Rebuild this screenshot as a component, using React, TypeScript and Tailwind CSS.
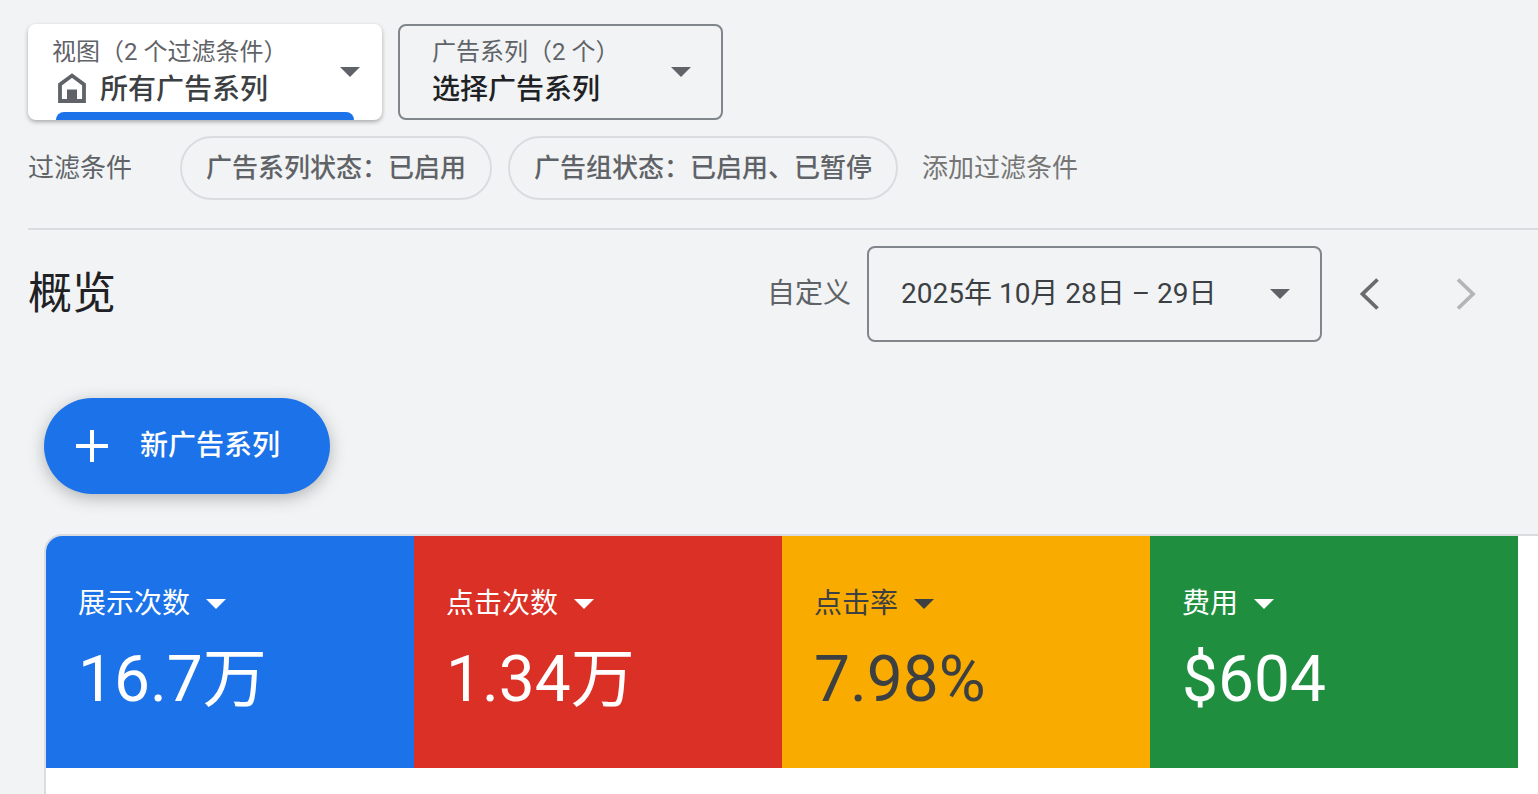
import { useState } from "react";

const metrics = [
  { label: "展示次数", value: "16.7万", className: "bg-[#1c72e8] text-white" },
  { label: "点击次数", value: "1.34万", className: "bg-[#da3026] text-white" },
  { label: "点击率", value: "7.98%", className: "bg-[#f9ab00] text-[#3c4043]" },
  { label: "费用", value: "$604", className: "bg-[#1f8f3f] text-white" },
];

const filters = ["广告系列状态：已启用", "广告组状态：已启用、已暂停"];

function Caret({ className = "" }: { className?: string }) {
  return (
    <svg viewBox="0 0 20 10" aria-hidden="true" className={`h-[10px] w-5 shrink-0 fill-current ${className}`}>
      <path d="M0 0h20L10 10z" />
    </svg>
  );
}

function HomeIcon() {
  return (
    <svg viewBox="0 0 28 30" aria-hidden="true" className="mb-1 h-[30px] w-7 shrink-0">
      <path d="M2 28V11.5L14 2.5l12 9V28z" fill="none" stroke="#5f6368" strokeWidth="3.8" />
      <path d="M9 16.5h10V28H9z" fill="#5f6368" />
    </svg>
  );
}

export default function App() {
  const [filter, setFilter] = useState("");

  return (
    <main className="flex min-h-screen flex-col overflow-x-hidden bg-[#f1f3f4] pt-6 font-[Roboto,'Noto_Sans_CJK_SC',sans-serif] text-[#5f6368]">
      {/* 视图和广告系列选择 */}
      <div className="flex gap-4 pl-7">
        <button
          aria-haspopup="listbox"
          className="relative flex h-24 w-[354px] items-center justify-between rounded-lg bg-white pr-[22px] pl-6 text-left shadow-[0_2px_4px_rgba(60,64,67,0.4)]"
        >
          <span>
            <span className="block text-2xl leading-9">视图（2 个过滤条件）</span>
            <span className="flex items-center gap-3.5 pl-1.5 text-[28px] leading-10 font-medium text-[#3c4043]">
              <HomeIcon />
              所有广告系列
            </span>
          </span>
          <Caret />
          <span className="absolute right-7 bottom-0 left-7 h-2 rounded-t-lg bg-[#1c72e8]" />
        </button>

        <button
          aria-haspopup="listbox"
          className="flex h-24 w-[325px] items-center justify-between rounded-lg border-2 border-[#80868b] pr-[30px] pl-8 text-left"
        >
          <span>
            <span className="block text-2xl leading-9">广告系列（2 个）</span>
            <span className="block text-[28px] leading-10 font-medium text-[#202124]">选择广告系列</span>
          </span>
          <Caret />
        </button>
      </div>

      {/* 过滤条件 */}
      <div className="ml-7 flex items-center gap-4 border-b-2 border-[#dadce0] pt-4 pb-7 text-[26px]">
        <label htmlFor="filter" className="mr-8 shrink-0">过滤条件</label>
        {filters.map((item) => (
          <button key={item} className="h-16 shrink-0 rounded-full border-2 border-[#dadce0] px-6 font-medium">
            {item}
          </button>
        ))}
        <input
          id="filter"
          value={filter}
          onChange={(e) => setFilter(e.target.value)}
          placeholder="添加过滤条件"
          className="h-16 min-w-0 flex-1 bg-transparent pl-2 outline-none placeholder:text-[#757575]"
        />
      </div>

      {/* 标题和日期 */}
      <div className="flex items-center pt-4 pr-6 pl-7">
        <h1 className="text-[44px] leading-[56px] text-[#202124]">概览</h1>
        <span className="mr-4 ml-auto text-[28px]">自定义</span>
        <button
          aria-haspopup="dialog"
          className="flex h-24 w-[455px] items-center justify-between rounded-lg border-2 border-[#80868b] pr-[30px] pl-8 text-[28px] text-[#3c4043]"
        >
          2025年 10月 28日 – 29日
          <Caret className="text-[#5f6368]" />
        </button>
        <button aria-label="上一个时间段" className="flex size-24 items-center justify-center">
          <svg viewBox="0 0 20 32" className="h-8 w-5" fill="none" stroke="#6b6b6b" strokeWidth="3.8">
            <path d="M17.5 1.5 2.5 16l15 14.5" />
          </svg>
        </button>
        <button aria-label="下一个时间段" disabled className="flex size-24 items-center justify-center">
          <svg viewBox="0 0 20 32" className="h-8 w-5" fill="none" stroke="#b4b5b6" strokeWidth="3.8">
            <path d="M2 1.5 17 16 2 30.5" />
          </svg>
        </button>
      </div>

      <button className="mt-14 ml-11 flex h-24 w-[286px] shrink-0 items-center gap-8 rounded-full bg-[#1c72e8] pl-8 text-[28px] font-medium text-white shadow-[0_4px_16px_rgba(60,64,67,0.35)]">
        <svg viewBox="0 0 32 32" aria-hidden="true" className="size-8" stroke="currentColor" strokeWidth="4">
          <path d="M16 0v32M0 16h32" />
        </svg>
        新广告系列
      </button>

      {/* 指标 */}
      <section className="mt-10 ml-11 flex-1 overflow-hidden rounded-tl-[18px] border-t-2 border-l-2 border-[#dadce0] bg-white pr-5">
        <div className="grid grid-cols-4">
          {metrics.map((metric) => (
            <div key={metric.label} className={`px-8 pt-12 pb-13 ${metric.className}`}>
              <button aria-haspopup="listbox" className="flex h-10 items-center gap-4 text-[28px]">
                {metric.label}
                <Caret />
              </button>
              <p className="mt-5 text-[64px] leading-[72px]">{metric.value}</p>
            </div>
          ))}
        </div>
      </section>
    </main>
  );
}
